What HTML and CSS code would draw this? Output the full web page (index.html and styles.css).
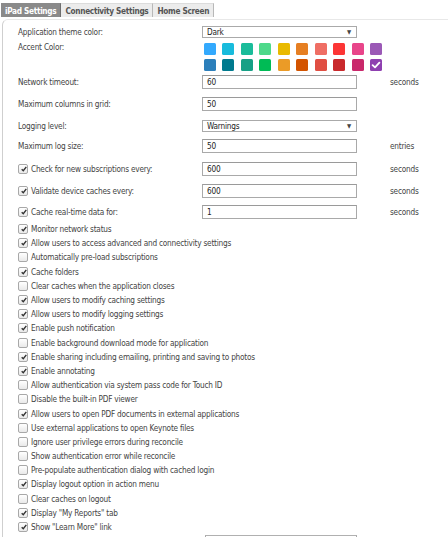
FILE: index.html
```html
<!DOCTYPE html>
<html>
<head>
<meta charset="utf-8">
<link rel="stylesheet" href="styles.css">
</head>
<body>
<div class="tabs">
  <span class="tab active">iPad Settings</span><span class="tab">Connectivity Settings</span><span class="tab">Home Screen</span>
</div>
<div class="panel">
  <div class="frow r-theme">
    <span class="lbl">Application theme color:</span>
    <div class="select sel-theme"><span>Dark</span><span class="arrow">▼</span></div>
  </div>
  <div class="frow r-accent">
    <span class="lbl lbl-top">Accent Color:</span>
    <div class="swatches">
      <span class="sw" style="background:#33a9fd"></span>
      <span class="sw" style="background:#18bbdc"></span>
      <span class="sw" style="background:#1abc9a"></span>
      <span class="sw" style="background:#4ed98a"></span>
      <span class="sw" style="background:#e9ba00"></span>
      <span class="sw" style="background:#e67f22"></span>
      <span class="sw" style="background:#ef6e64"></span>
      <span class="sw" style="background:#fc3535"></span>
      <span class="sw" style="background:#e8458a"></span>
      <span class="sw" style="background:#9b59b6"></span>
      <span class="sw" style="background:#2c7fbb"></span>
      <span class="sw" style="background:#007a8e"></span>
      <span class="sw" style="background:#17a086"></span>
      <span class="sw" style="background:#00bb55"></span>
      <span class="sw" style="background:#eb9b27"></span>
      <span class="sw" style="background:#d35400"></span>
      <span class="sw" style="background:#e04e42"></span>
      <span class="sw" style="background:#c9292c"></span>
      <span class="sw" style="background:#c9286b"></span>
      <span class="sw sel" style="background:#8e40b0"><svg viewBox="0 0 12 12" width="12" height="12"><path d="M2.6 6.2 L5 8.4 L9.4 3.6" fill="none" stroke="#fff" stroke-width="1.8" stroke-linecap="round" stroke-linejoin="round"/></svg></span>
    </div>
  </div>
  <div class="frow r-net">
    <span class="lbl">Network timeout:</span>
    <div class="input">60</div>
    <span class="unit">seconds</span>
  </div>
  <div class="frow r-cols">
    <span class="lbl">Maximum columns in grid:</span>
    <div class="input">50</div>
  </div>
  <div class="frow r-log">
    <span class="lbl">Logging level:</span>
    <div class="select"><span>Warnings</span><span class="arrow">▼</span></div>
  </div>
  <div class="frow r-logsize">
    <span class="lbl">Maximum log size:</span>
    <div class="input">50</div>
    <span class="unit">entries</span>
  </div>
  <div class="frow r-check">
    <span class="lbl"><span class="cb on"></span>Check for new subscriptions every:</span>
    <div class="input">600</div>
    <span class="unit">seconds</span>
  </div>
  <div class="frow r-valid">
    <span class="lbl"><span class="cb on"></span>Validate device caches every:</span>
    <div class="input">600</div>
    <span class="unit">seconds</span>
  </div>
  <div class="frow r-cache">
    <span class="lbl"><span class="cb on"></span>Cache real-time data for:</span>
    <div class="input">1</div>
    <span class="unit">seconds</span>
  </div>
  <ul class="checks">
    <li><span class="cb on"></span>Monitor network status</li>
    <li><span class="cb on"></span>Allow users to access advanced and connectivity settings</li>
    <li><span class="cb"></span>Automatically pre-load subscriptions</li>
    <li><span class="cb on"></span>Cache folders</li>
    <li><span class="cb"></span>Clear caches when the application closes</li>
    <li><span class="cb on"></span>Allow users to modify caching settings</li>
    <li><span class="cb on"></span>Allow users to modify logging settings</li>
    <li><span class="cb on"></span>Enable push notification</li>
    <li><span class="cb"></span>Enable background download mode for application</li>
    <li><span class="cb on"></span>Enable sharing including emailing, printing and saving to photos</li>
    <li><span class="cb on"></span>Enable annotating</li>
    <li><span class="cb"></span>Allow authentication via system pass code for Touch ID</li>
    <li><span class="cb"></span>Disable the built-in PDF viewer</li>
    <li><span class="cb on"></span>Allow users to open PDF documents in external applications</li>
    <li><span class="cb"></span>Use external applications to open Keynote files</li>
    <li><span class="cb"></span>Ignore user privilege errors during reconcile</li>
    <li><span class="cb"></span>Show authentication error while reconcile</li>
    <li><span class="cb"></span>Pre-populate authentication dialog with cached login</li>
    <li><span class="cb on"></span>Display logout option in action menu</li>
    <li><span class="cb"></span>Clear caches on logout</li>
    <li><span class="cb on"></span>Display "My Reports" tab</li>
    <li><span class="cb on"></span>Show "Learn More" link</li>
  </ul>
  <div class="frow r-cut">
    <span class="lbl"></span>
    <div class="input"></div>
  </div>
</div>
</body>
</html>
```

FILE: styles.css
```css
html, body {
  margin: 0;
  padding: 0;
  background: #fff;
  overflow: hidden;
}
body {
  width: 448px;
  height: 537px;
  font-family: "DejaVu Sans Condensed", "DejaVu Sans", sans-serif;
  font-size: 8.2px;
  letter-spacing: -0.22px;
  color: #444;
}
.tabs {
  display: flex;
  padding-top: 3px;
  padding-left: 1px;
  height: 14px;
}
.tab {
  display: block;
  height: 14px;
  line-height: 14px;
  padding: 0 4px;
  font-weight: bold;
  color: #555;
  background: #ececec;
  border-right: 1px solid #b8b8b8;
  border-top: 1px solid #dcdcdc;
  box-sizing: border-box;
  letter-spacing: -0.3px;
}
.tab.active {
  background: #8a8a8a;
  color: #fff;
  border-top-color: #8a8a8a;
  border-right-color: #6e6e6e;
}
.panel {
  margin-top: 2px;
  margin-left: 2px;
  border-left: 1px solid #cfcfcf;
  border-top: 1px solid #e8e8e8;
  border-top-left-radius: 6px;
  padding-left: 15px;
  padding-top: 6px;
}
.frow {
  display: grid;
  grid-template-columns: 184px 155px auto;
  align-items: center;
}
.lbl {
  display: flex;
  align-items: center;
  white-space: nowrap;
}
.lbl-top {
  align-self: start;
  margin-top: -1px;
}
.unit {
  margin-left: 33px;
}
.input {
  height: 14px;
  box-sizing: border-box;
  border: 1px solid #a9a9a9;
  border-top-color: #9a9a9a;
  background: #fff;
  color: #222;
  padding-left: 4px;
  line-height: 12px;
}
.select {
  height: 12px;
  box-sizing: border-box;
  border: 1px solid #aaa;
  background: #fff;
  color: #222;
  padding: 0 5px 0 4px;
  line-height: 10px;
  display: flex;
  justify-content: space-between;
  align-items: center;
}
.arrow {
  font-size: 6px;
  color: #444;
}
.r-accent { margin-top: 5px; }
.swatches {
  grid-column: 2 / 4;
  display: grid;
  grid-template-columns: repeat(10, 12px);
  column-gap: 6.45px;
  row-gap: 4px;
  padding-left: 2px;
}
.sw {
  width: 12px;
  height: 12px;
  border-radius: 1.5px;
  display: block;
}
.sw svg { display: block; }
.r-net { margin-top: 4px; }
.r-cols { margin-top: 8px; }
.r-log { margin-top: 9px; }
.r-logsize { margin-top: 7px; }
.r-check { margin-top: 9px; }
.r-valid { margin-top: 8px; }
.r-cache { margin-top: 7px; }
.r-cut { margin-top: 1px; }
.r-cut .input { margin-left: 3px; border-top-color: #b0b0b0; }
.cb {
  display: inline-block;
  flex: none;
  width: 10px;
  height: 10px;
  box-sizing: border-box;
  border: 1px solid #a8a8a8;
  border-radius: 2px;
  background: linear-gradient(#ffffff, #e9e9e9);
  margin-right: 3px;
  position: relative;
}
.cb.on::after {
  content: "";
  position: absolute;
  left: 1.5px;
  top: 1px;
  width: 6px;
  height: 6px;
  background: url("data:image/svg+xml;utf8,<svg xmlns='http://www.w3.org/2000/svg' viewBox='0 0 6 6'><path d='M0.7 3.2 L2.3 4.8 L5.3 0.9' fill='none' stroke='%23333' stroke-width='1.4'/></svg>") no-repeat;
}
.checks {
  list-style: none;
  margin: 3px 0 0 0;
  padding: 0;
}
.checks li {
  height: 14.2px;
  display: flex;
  align-items: center;
  white-space: nowrap;
}
```
